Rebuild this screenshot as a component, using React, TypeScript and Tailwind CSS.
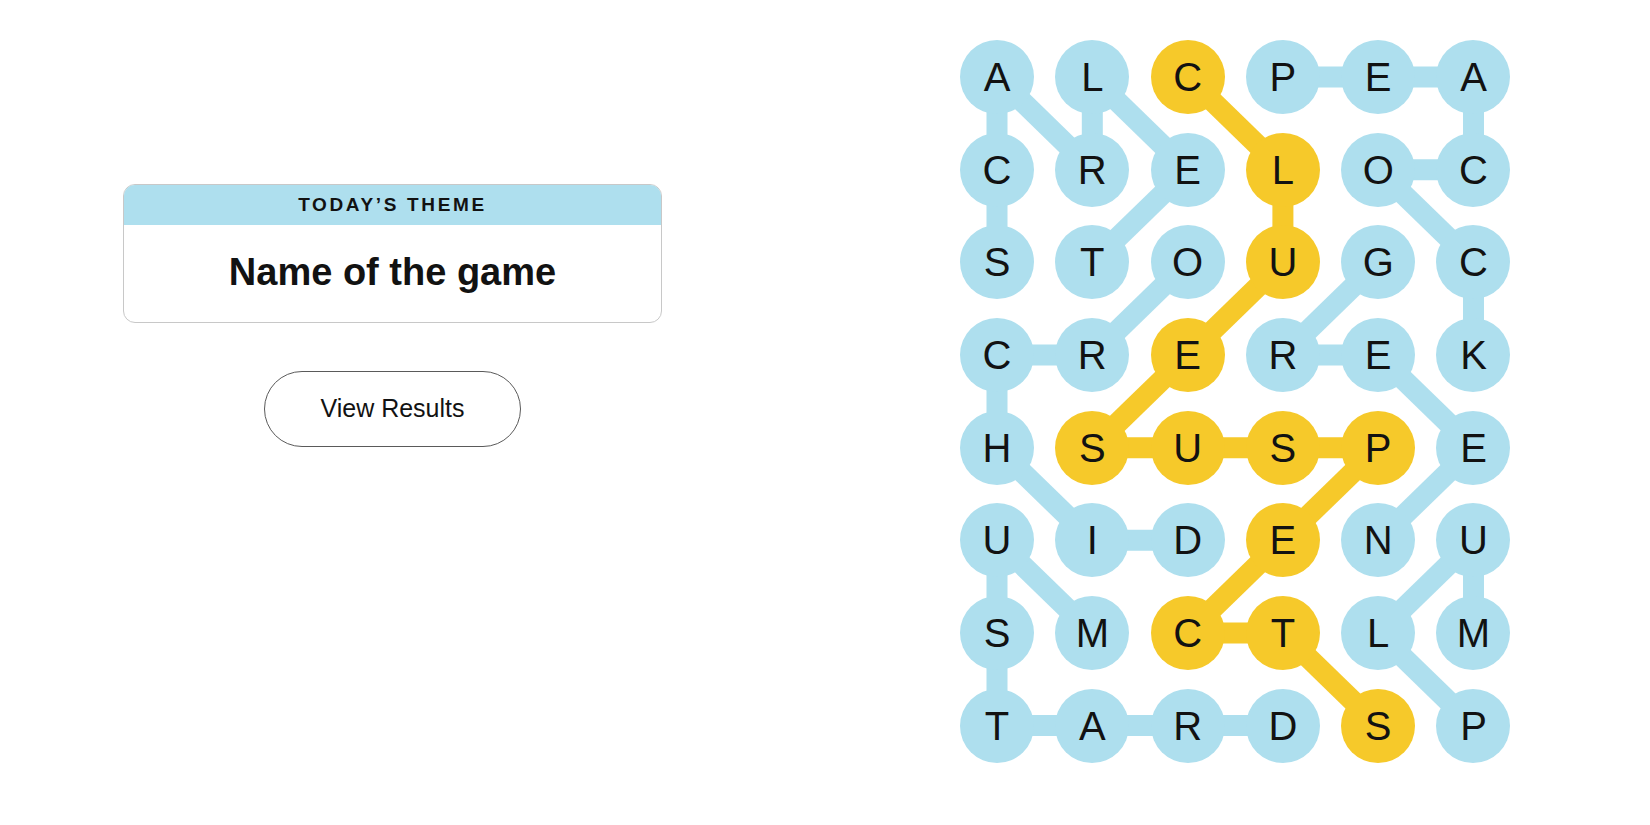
import React from "react"

const BLUE = "#aedfee"
const YELLOW = "#f6c92a"

const grid = ["ALCPEA", "CRELOC", "STOUGC", "CREREK", "HSUSPE", "UIDENU", "SMCTLM", "TARDSP"]

type Cell = [number, number]

// found words as paths of [row, col]
const words: { path: Cell[]; spangram?: boolean }[] = [
  { path: [[2, 0], [1, 0], [0, 0], [1, 1], [0, 1], [1, 2], [2, 1]] }, // SCARLET
  { path: [[0, 3], [0, 4], [0, 5], [1, 5], [1, 4], [2, 5], [3, 5]] }, // PEACOCK
  { path: [[2, 4], [3, 3], [3, 4], [4, 5], [5, 4]] }, // GREEN
  { path: [[7, 5], [6, 4], [5, 5], [6, 5]] }, // PLUM
  { path: [[6, 1], [5, 0], [6, 0], [7, 0], [7, 1], [7, 2], [7, 3]] }, // MUSTARD
  { path: [[2, 2], [3, 1], [3, 0], [4, 0], [5, 1], [5, 2]] }, // ORCHID
  {
    spangram: true,
    path: [[0, 2], [1, 3], [2, 3], [3, 2], [4, 1], [4, 2], [4, 3], [4, 4], [5, 3], [6, 2], [6, 3], [7, 4]],
  }, // CLUESUSPECTS
]

const CELL = 74
const PITCH_X = 95.3
const PITCH_Y = 92.66

const spangramCells = new Set(
  words.filter((w) => w.spangram).flatMap((w) => w.path.map(([r, c]) => `${r}-${c}`))
)

function Board() {
  const cx = (c: number) => CELL / 2 + c * PITCH_X
  const cy = (r: number) => CELL / 2 + r * PITCH_Y

  return (
    <div className="relative">
      <svg className="absolute inset-0" width={551} height={723}>
        {words.map((w, i) =>
          w.path.slice(1).map(([r, c], j) => {
            const [pr, pc] = w.path[j]
            return (
              <line
                key={`${i}-${j}`}
                x1={cx(pc)}
                y1={cy(pr)}
                x2={cx(c)}
                y2={cy(r)}
                stroke={w.spangram ? YELLOW : BLUE}
                strokeWidth={21}
              />
            )
          })
        )}
      </svg>
      <div className="relative grid grid-cols-[repeat(6,74px)] gap-x-[21.3px] gap-y-[18.66px]">
        {grid.map((row, r) =>
          row.split("").map((ch, c) => (
            <div
              key={`${r}-${c}`}
              className={`flex h-[74px] w-[74px] items-center justify-center rounded-full text-[40px] leading-none text-[#121212] ${
                spangramCells.has(`${r}-${c}`) ? "bg-[#f6c92a]" : "bg-[#aedfee]"
              }`}
            >
              {ch}
            </div>
          ))
        )}
      </div>
    </div>
  )
}

export default function App() {
  return (
    <div className="flex h-[825px] w-full bg-white font-['Liberation_Sans',Arial,sans-serif] text-[#121212]">
      <section className="flex w-[785px] flex-col items-center pt-[184px]">
        <div className="w-[539px] overflow-hidden rounded-[12px] border border-[#c8c8c8]">
          <div className="flex h-[40px] items-center justify-center bg-[#aedfee] text-[19px] font-bold tracking-[0.14em]">
            TODAY’S THEME
          </div>
          <div className="flex h-[97px] items-center justify-center pb-[3px] text-[38px] font-bold">
            Name of the game
          </div>
        </div>
        <button className="mt-[48px] h-[76px] w-[257px] rounded-full border-[1.5px] border-[#5a5a5a] bg-white text-[25px] text-[#121212]">
          View Results
        </button>
      </section>
      <section className="pl-[175px] pt-[40px]">
        <Board />
      </section>
    </div>
  )
}
